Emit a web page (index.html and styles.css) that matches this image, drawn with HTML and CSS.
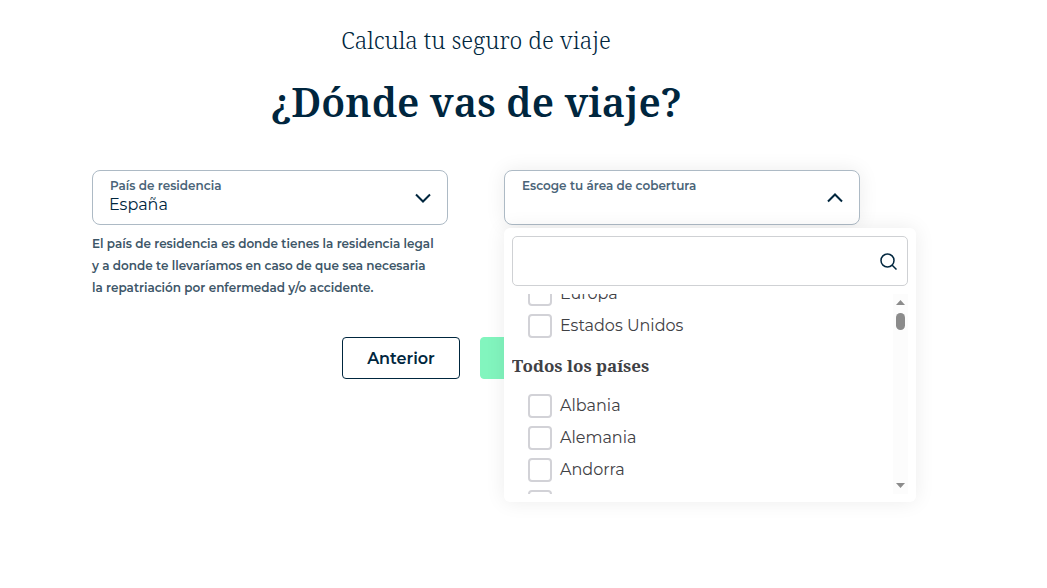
FILE: index.html
```
<!DOCTYPE html>
<html lang="es">
<head>
    <meta charset="UTF-8">
    <meta name="viewport" content="width=device-width, initial-scale=1.0">
    <title>Calcula tu seguro de viaje</title>
    <link rel="stylesheet" href="styles.css">
</head>
<body>
    <main class="page">
        <form class="quote">
            <p class="subtitle">Calcula tu seguro de viaje</p>
            <h1 class="title">¿Dónde vas de viaje?</h1>
            <div class="fields">
                <div>
                    <div class="field">
                        <label class="field-label" for="residence">País de residencia</label>
                        <select class="field-control" id="residence">
                            <option>España</option>
                        </select>
                        <svg class="chevron" width="16" height="10" viewBox="0 0 16 10" aria-hidden="true"><path d="M1 1.500 8 8.500l7-7"/></svg>
                    </div>
                    <p class="help">El país de residencia es donde tienes la residencia legal y a donde te llevaríamos en caso de que sea necesaria la repatriación por enfermedad y/o accidente.</p>
                </div>
                <div class="dropdown">
                    <div class="field open">
                        <label class="field-label" for="coverage">Escoge tu área de cobertura</label>
                        <button class="field-control" id="coverage" type="button" aria-expanded="true" aria-controls="coverageMenu"></button>
                        <svg class="chevron" width="16" height="10" viewBox="0 0 16 10" aria-hidden="true"><path d="M1 8.500l7-7 7 7"/></svg>
                    </div>
                    <div class="menu" id="coverageMenu">
                        <div class="search">
                            <input class="search-input" type="search" aria-label="Buscar">
                            <svg class="search-icon" width="17" height="17" viewBox="0 0 17 17" aria-hidden="true"><circle cx="7.500" cy="7.500" r="6.500"/><path d="m12.200 12.200 4.300 4.300"/></svg>
                        </div>
                        <div class="scroll">
                            <div class="options" id="options">
                                <label class="option"><input type="checkbox">Europa</label>
                                <label class="option"><input type="checkbox">Estados Unidos</label>
                                <h2 class="group">Todos los países</h2>
                                <label class="option"><input type="checkbox">Albania</label>
                                <label class="option"><input type="checkbox">Alemania</label>
                                <label class="option"><input type="checkbox">Andorra</label>
                                <div class="option"><input type="checkbox" aria-label="Angola"></div>
                            </div>
                            <div class="scrollbar" aria-hidden="true">
                                <svg width="9" height="5" viewBox="0 0 9 5"><path d="M4.500 0 9 5H0z"/></svg>
                                <span class="thumb"></span>
                                <svg class="arrow-down" width="9" height="5" viewBox="0 0 9 5"><path d="M0 0h9L4.500 5z"/></svg>
                            </div>
                        </div>
                    </div>
                </div>
            </div>
            <div class="actions">
                <button class="btn" type="button">Anterior</button>
                <button class="btn btn-next" type="submit" aria-label="Siguiente"></button>
            </div>
        </form>
    </main>
    <script>
        document.getElementById('options').scrollTop = 16;
    </script>
</body>
</html>
```
FILE: styles.css
```
* {
    box-sizing: border-box;
}
body {
    min-height: 100vh;
    margin: 0;
    background: #fff;
    color: #00263e;
    font-family: Montserrat, Inter, sans-serif;
}
.page {
    min-height: 100vh;
    padding: 24px 95px 24px 0;
}
.quote {
    max-width: 768px;
    margin: 0 auto;
}
.subtitle {
    margin: 0;
    font-family: "Noto Serif", "Liberation Serif", serif;
    font-size: 23px;
    line-height: 32px;
    font-weight: 300;
    text-align: center;
}
.title {
    margin: 18px 0 40px;
    font-family: "Noto Serif", "Liberation Serif", serif;
    font-size: 40px;
    line-height: 56px;
    font-weight: 600;
    text-align: center;
}
.fields {
    display: grid;
    grid-template-columns: 1fr 1fr;
    gap: 56px;
}
/* label, control and chevron share one grid cell */
.field {
    display: grid;
    height: 55px;
    border: 1px solid #adbac5;
    border-radius: 8px;
    background: #fff;
}
.field > * {
    grid-area: 1 / 1;
}
.field.open {
    box-shadow: 0 0 20px rgba(0, 0, 0, 0.08);
}
.field-label {
    z-index: 1;
    justify-self: start;
    padding: 7px 17px;
    color: #4a6478;
    font-size: 12px;
    line-height: 16px;
    font-weight: 600;
    pointer-events: none;
}
.field-control {
    appearance: none;
    width: 100%;
    padding: 14px 16px 0;
    border: 0;
    border-radius: 8px;
    background: none;
    color: #00263e;
    font-family: inherit;
    font-size: 16px;
    outline: none;
}
.chevron {
    align-self: center;
    justify-self: end;
    margin-right: 16px;
    fill: none;
    stroke: #00263e;
    stroke-width: 2;
    pointer-events: none;
}
.help {
    margin: 8px 0 0;
    padding-right: 12px;
    color: #3d5668;
    font-size: 12px;
    line-height: 22px;
    font-weight: 600;
}
.dropdown {
    position: relative;
}
.menu {
    position: absolute;
    z-index: 2;
    top: 58px;
    left: 0;
    width: 412px;
    padding: 8px;
    border-radius: 6px;
    background: #fff;
    box-shadow: 0 0 20px rgba(0, 0, 0, 0.08);
}
.search {
    display: flex;
    align-items: center;
    height: 50px;
    margin-bottom: 8px;
    padding-right: 10px;
    border: 1px solid #cfd1d4;
    border-radius: 5px;
}
.search-input {
    flex: 1;
    min-width: 0;
    height: 48px;
    padding: 0 16px;
    border: 0;
    background: none;
    font-family: inherit;
    font-size: 16px;
    outline: none;
}
.search-icon {
    fill: none;
    stroke: #00263e;
    stroke-width: 1.5;
}
.scroll {
    display: flex;
    height: 200px;
}
.options {
    flex: 1;
    overflow-y: scroll;
    scrollbar-width: none;
}
.option {
    display: flex;
    align-items: center;
    gap: 8px;
    height: 32px;
    padding-left: 16px;
    color: #3f4145;
    font-size: 16px;
    line-height: 18px;
    font-weight: 400;
}
.option input {
    appearance: none;
    width: 24px;
    height: 24px;
    margin: 0;
    border: 2px solid #d2d2d7;
    border-radius: 4px;
    background: #fff;
}
.option input:checked {
    background: #82f5be;
}
.group {
    margin: 0;
    color: #3f4145;
    font-family: "Noto Serif", "Liberation Serif", serif;
    font-size: 17px;
    line-height: 48px;
}
.scrollbar {
    display: flex;
    flex-direction: column;
    align-items: center;
    width: 15px;
    padding: 6px 0;
    background: #fcfcfc;
    fill: #8b8b8b;
}
.thumb {
    width: 9px;
    height: 17px;
    margin-top: 8px;
    border-radius: 5px;
    background: #8b8b8b;
}
.arrow-down {
    margin-top: auto;
}
.actions {
    display: flex;
    justify-content: center;
    gap: 20px;
    margin-top: 38px;
}
.btn {
    min-width: 118px;
    height: 42px;
    padding: 0 24px;
    border: 1px solid #00263e;
    border-radius: 4px;
    background: #fff;
    color: #00263e;
    font-family: inherit;
    font-size: 16px;
    font-weight: 600;
    cursor: pointer;
}
.btn-next {
    min-width: 130px;
    border-color: #82f5be;
    background: #82f5be;
}
```
